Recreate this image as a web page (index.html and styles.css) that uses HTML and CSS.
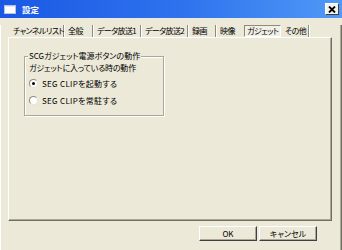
FILE: index.html
```html
<!DOCTYPE html>
<html lang="ja">
<head>
<meta charset="utf-8">
<title>設定</title>
<link rel="stylesheet" href="styles.css">
</head>
<body>
<div class="window">
  <div class="titlebar">
    <svg class="ticon" width="12" height="9" viewBox="0 0 12 9"><rect x="0.5" y="0.5" width="11" height="8" fill="#fff" stroke="#b8c4dc"/><rect x="1" y="1" width="10" height="1" fill="#dfe6f4"/></svg>
    <span class="ttext">設定</span>
    <span class="close"><svg width="8" height="7" viewBox="0 0 8 7"><path d="M1 0.5 L7 6.5 M7 0.5 L1 6.5" stroke="#000" stroke-width="1.8"/></svg></span>
  </div>
  <div class="frame">
    <div class="tabs">
      <span class="tab w55">チャンネルリスト</span>
      <span class="tab w29">全般</span>
      <span class="tab w48">データ放送1</span>
      <span class="tab w47">データ放送2</span>
      <span class="tab w28">録画</span>
      <span class="tab w28 nosep">映像</span>
      <span class="tab w37 sel">ガジェット</span>
      <span class="tab w28">その他</span>
    </div>
    <div class="panel">
      <fieldset class="group">
        <legend>SCGガジェット電源ボタンの動作</legend>
        <div class="label">ガジェットに入っている時の動作</div>
        <div class="radio"><span class="rb on"></span><span>SEG CLIPを起動する</span></div>
        <div class="radio"><span class="rb"></span><span>SEG CLIPを常駐する</span></div>
      </fieldset>
    </div>
    <div class="buttons">
      <span class="btn">OK</span>
      <span class="btn">キャンセル</span>
    </div>
  </div>
</div>
</body>
</html>
```
FILE: styles.css
```css
* { box-sizing: border-box; }
html, body { margin: 0; padding: 0; background: #ece9d8; }
body {
  font-family: "Noto Sans CJK JP", "Noto Sans", sans-serif;
  font-size: 8px;
  font-feature-settings: "palt";
  color: #000;
}
.window { width: 342px; height: 250px; background: #ece9d8; }
.titlebar {
  height: 18px;
  display: flex;
  align-items: center;
  background: linear-gradient(90deg, #1a58e4 0%, #2f74ee 55%, #5099f6 100%);
  color: #fff;
}
.ticon { margin-left: 4px; margin-top: 1px; display: block; }
.ttext { margin-left: 6px; font-weight: bold; font-size: 8.5px; line-height: 12px; }
.close {
  margin-left: auto;
  margin-right: 3px;
  width: 14px;
  height: 12px;
  background: #f2f1ea;
  border: 1px solid;
  border-color: #fff #404040 #404040 #fff;
  display: flex;
  align-items: center;
  justify-content: center;
}
.close svg { display: block; }
.frame {
  height: 232px;
  border-left: 1px solid #fff;
  border-right: 1px solid #716f64;
  border-bottom: 1px solid #716f64;
  box-shadow: inset -1px -1px 0 #aca899;
  padding: 0 9px 0 7px;
}
.tabs {
  display: flex;
  margin: 7px 0 0 1px;
  height: 12px;
}
.tab {
  height: 12px;
  line-height: 12px;
  padding-left: 4px;
  white-space: nowrap;
  letter-spacing: -0.6px;
  border-right: 1px solid #8e8a7c;
  box-shadow: 1px 0 0 #fff;
}
.tab.nosep { border-right: 0; box-shadow: none; }
.tab.sel {
  border: 1px solid;
  border-color: #8e8a7c #fff #fff #8e8a7c;
  box-shadow: none;
  padding-left: 2px;
  line-height: 10px;
  background: #f2f0e6;
}
.w55 { width: 55px; } .w29 { width: 29px; } .w48 { width: 48px; }
.w47 { width: 47px; } .w28 { width: 28px; } .w37 { width: 37px; }
.panel {
  height: 184px;
  border: 1px solid;
  border-color: #fff #716f64 #716f64 #fff;
  box-shadow: inset -1px -1px 0 #aca899;
  padding: 12px 0 0 15px;
}
.group {
  margin: 0;
  width: 140px;
  border: 1px solid #aca899;
  box-shadow: 1px 1px 0 #fff, inset 1px 1px 0 #fff;
  padding: 0 0 7px 3px;
}
.group legend {
  padding: 0 1px;
  line-height: 12px;
  background: #ece9d8;
  margin-left: 0;
}
.label { height: 12px; line-height: 12px; margin-left: 1px; letter-spacing: -0.2px; }
.radio {
  display: flex;
  align-items: center;
  height: 16px;
  margin-top: 1px;
  gap: 4px;
  letter-spacing: 0.3px;
}
.radio + .radio { margin-top: 1px; }
.rb {
  width: 9px;
  height: 9px;
  border-radius: 50%;
  background: #fff;
  border: 1px solid;
  border-color: #8e8a7c #e6e3d6 #e6e3d6 #8e8a7c;
  position: relative;
  margin-left: 1px;
}
.rb.on::after {
  content: "";
  position: absolute;
  left: 2px; top: 2px;
  width: 3px; height: 3px;
  border-radius: 50%;
  background: #000;
}
.buttons {
  display: flex;
  justify-content: flex-end;
  gap: 2px;
  margin-top: 5px;
  padding-right: 15px;
}
.btn {
  width: 58px;
  height: 15px;
  line-height: 13px;
  text-align: center;
  border: 1px solid;
  border-color: #fff #404040 #404040 #fff;
  box-shadow: inset -1px -1px 0 #aca899;
  background: #ece9d8;
}
```
